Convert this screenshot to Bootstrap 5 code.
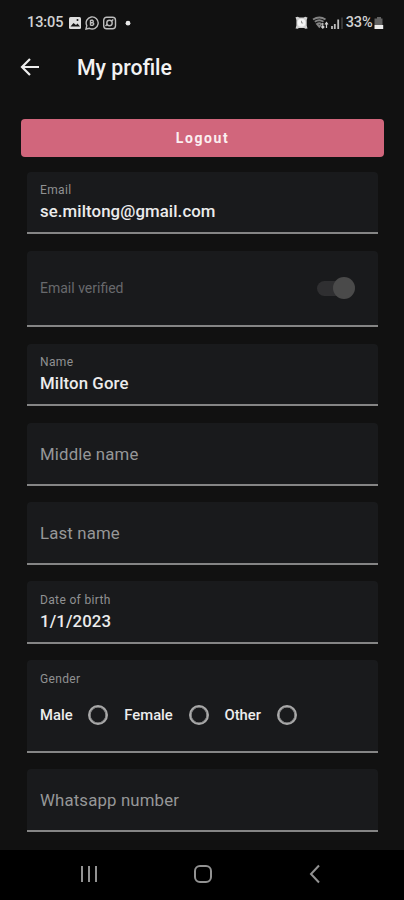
<!DOCTYPE html>
<html lang="en" data-bs-theme="dark">
<head>
<meta charset="utf-8">
<meta name="viewport" content="width=device-width, initial-scale=1">
<title>My profile</title>
<link href="https://cdn.jsdelivr.net/npm/bootstrap@5.3.0/dist/css/bootstrap.min.css" rel="stylesheet">
<style>
body{background:#111111;font-family:Roboto,"Liberation Sans",sans-serif;color:#e9e9e9;height:900px;overflow:hidden}
svg{display:block;flex:none}
.status{height:44px;padding:2px 20px 0 27px;font-size:14.5px;font-weight:500;color:#d2d2d2}
.status .clock{width:37px;letter-spacing:-.1px}
.status .charge{letter-spacing:-.1px;margin-right:1.5px}
.appbar{height:46px;padding:1px 20px 0 19px}
.appbar svg{margin-bottom:2px}
.title{font-size:21.3px;font-weight:500;line-height:26px;margin:0 0 0 36px;color:#f3f3f3}
.logout{height:38px;margin:29px 20px 0 21px;padding:0;border:0;border-radius:4px;background:#d1667c;color:#fbeff1;font-size:14px;font-weight:700;letter-spacing:1.6px}
.logout:hover{background:#c75b72;color:#fff}
.fields{padding:14.8px 26px 0 27px;gap:16.5px}
.field{height:62.7px;background:#191a1c;border-bottom:2px solid #858585;border-radius:4px 4px 0 0;padding:0 13px}
.field-tall{height:76.2px}
.field-gender{height:92.4px}
.caption{font-size:12px;line-height:14px;color:#909192;letter-spacing:.35px}
.val{font-size:16.8px;font-weight:500;line-height:20px;color:#ececec;letter-spacing:.1px}
.hint{font-size:16.8px;color:#969798;letter-spacing:.15px;padding-top:2px}
.off{font-size:14px;color:#68696c;padding-top:1px}
.track{width:33px;height:15px;border-radius:8px;background:#2f2f31;margin-right:15px}
.knob{width:22px;height:22px;border-radius:50%;background:#4a4a4a;margin-right:-5px}
.choices{height:40px;margin-top:9px}
.choice{margin-right:16px}
.opt{font-size:14.8px;font-weight:500;line-height:20px;color:#ededed;margin-right:15.7px}
.form-check-input.ring{width:20px;height:20px;margin:0;border:2px solid #a9a9a9;box-shadow:inset 0 0 0 .6px #a9a9a9;background-color:transparent}
.sysnav{height:50px;background:#000;padding:0 82px 2px 80px}
</style>
</head>
<body class="d-flex flex-column">
<header>
  <div class="status d-flex align-items-center justify-content-between">
    <div class="d-flex align-items-center">
      <span class="clock">13:05</span>
      <svg class="ms-1" width="64" height="14" viewBox="0 0 64 14" fill="none">
        <rect x="1" y="1" width="12" height="12" rx="1.500" fill="#dedede"/><path d="M2.500 10.500 5.500 7l2.500 2 1.500-1.500 2.500 3z" fill="#151515"/><circle cx="9.500" cy="4" r="1" fill="#151515"/>
        <g stroke="#bdbdbd" stroke-width="1.400"><path d="M18 13l.8-3.400A6 6 0 1 1 21.500 12.300z"/><path d="M22.500 4v5.500M22.500 4.200h2q1.500 1.200 0 2.500h-2m2 0q2.500 1.200 0 2.700h-2"/><rect x="35.700" y="1.200" width="11.800" height="11.500" rx="3"/><circle cx="41.500" cy="7" r="2.700"/><path d="M37.500 10l2-2M43.500 5l1.800-1.600"/></g>
        <circle cx="60" cy="7.200" r="2.400" fill="#e8e8e8"/>
      </svg>
    </div>
    <div class="d-flex align-items-center">
      <svg width="51" height="14" viewBox="0 0 51 14" fill="none">
        <path d="M.5 1.200 2.800.8l1.500.8h4.400L10.200.8l2.300.6-.8 2.600v5.500l.8 3-2.300.3-1-.7H3.800l-1 .7-2.200-.3.8-3V4z" fill="#d0d0d0"/><circle cx="6.500" cy="6.800" r="4" fill="#f4f4f4"/><path d="M6.500 4.800V7h1.600" stroke="#999"/>
        <path d="M18 3.500q6.500-4 12.500 0M19.800 5.800q4.500-3 8.700 0M22 8q2.200-1.500 4.500 0l-2.200 2.800z" stroke="#838383" stroke-width="1.900"/><path d="M27.800 7v5m-1.500-1.500 1.500 1.700 1.500-1.700M31.500 12V6.500M30 8.500l1.500-2 1.500 2" stroke="#cfcfcf" stroke-width="1.200"/>
        <path d="M37 10v3M39.800 8v5M43.200 3.500V13" stroke="#bdbdbd" stroke-width="1.800"/><path d="M47 1.500V13" stroke="#3b3b3b" stroke-width="1.800"/>
      </svg>
      <span class="charge">33%</span>
      <svg width="10" height="14" viewBox="0 0 10 14"><path d="M3 1h4v1.500h1.500V9h-8V2.500H3z" fill="#626262"/><path d="M.5 9h8.700v4H.5z" fill="#ededed"/></svg>
    </div>
  </div>
  <div class="appbar d-flex align-items-center">
    <svg width="22" height="22" viewBox="0 0 22 22" fill="none" stroke="#ededed" stroke-width="2.200"><path d="M20 11H3.500M11 3 3 11l8 8"/></svg>
    <h1 class="title">My profile</h1>
  </div>
</header>
<main class="d-flex flex-column flex-grow-1">
  <button type="button" class="btn logout">Logout</button>
  <div class="fields d-flex flex-column">
    <div class="field d-flex flex-column justify-content-center"><div class="caption">Email</div><div class="val mt-1">se.miltong@gmail.com</div></div>
    <div class="field field-tall d-flex align-items-center justify-content-between"><span class="off">Email verified</span><span class="track d-flex align-items-center justify-content-end"><span class="knob"></span></span></div>
    <div class="field d-flex flex-column justify-content-center"><div class="caption">Name</div><div class="val mt-1">Milton Gore</div></div>
    <div class="field d-flex align-items-center"><span class="hint">Middle name</span></div>
    <div class="field d-flex align-items-center"><span class="hint">Last name</span></div>
    <div class="field d-flex flex-column justify-content-center"><div class="caption">Date of birth</div><div class="val mt-1">1/1/2023</div></div>
    <div class="field field-gender">
      <div class="caption pt-2 mt-1">Gender</div>
      <div class="choices d-flex align-items-center">
        <div class="choice d-flex align-items-center"><label class="opt" for="g1">Male</label><input id="g1" class="form-check-input ring" type="radio" name="gender"></div>
        <div class="choice d-flex align-items-center"><label class="opt" for="g2">Female</label><input id="g2" class="form-check-input ring" type="radio" name="gender"></div>
        <div class="choice d-flex align-items-center"><label class="opt" for="g3">Other</label><input id="g3" class="form-check-input ring" type="radio" name="gender"></div>
      </div>
    </div>
    <div class="field d-flex align-items-center"><span class="hint">Whatsapp number</span></div>
  </div>
</main>
<nav class="sysnav d-flex align-items-center justify-content-between">
  <svg width="18" height="20" viewBox="0 0 18 20" stroke="#929292" stroke-width="2"><path d="M2 2v16M9 2v16M16 2v16"/></svg>
  <svg width="20" height="20" viewBox="0 0 20 20" fill="none" stroke="#929292" stroke-width="2"><rect x="2" y="2" width="16" height="16" rx="5"/></svg>
  <svg width="14" height="20" viewBox="0 0 14 20" fill="none" stroke="#929292" stroke-width="2"><path d="M11 1.500 3 10l8 8.500"/></svg>
</nav>
<script src="https://cdn.jsdelivr.net/npm/bootstrap@5.3.0/dist/js/bootstrap.bundle.min.js"></script>
</body>
</html>
